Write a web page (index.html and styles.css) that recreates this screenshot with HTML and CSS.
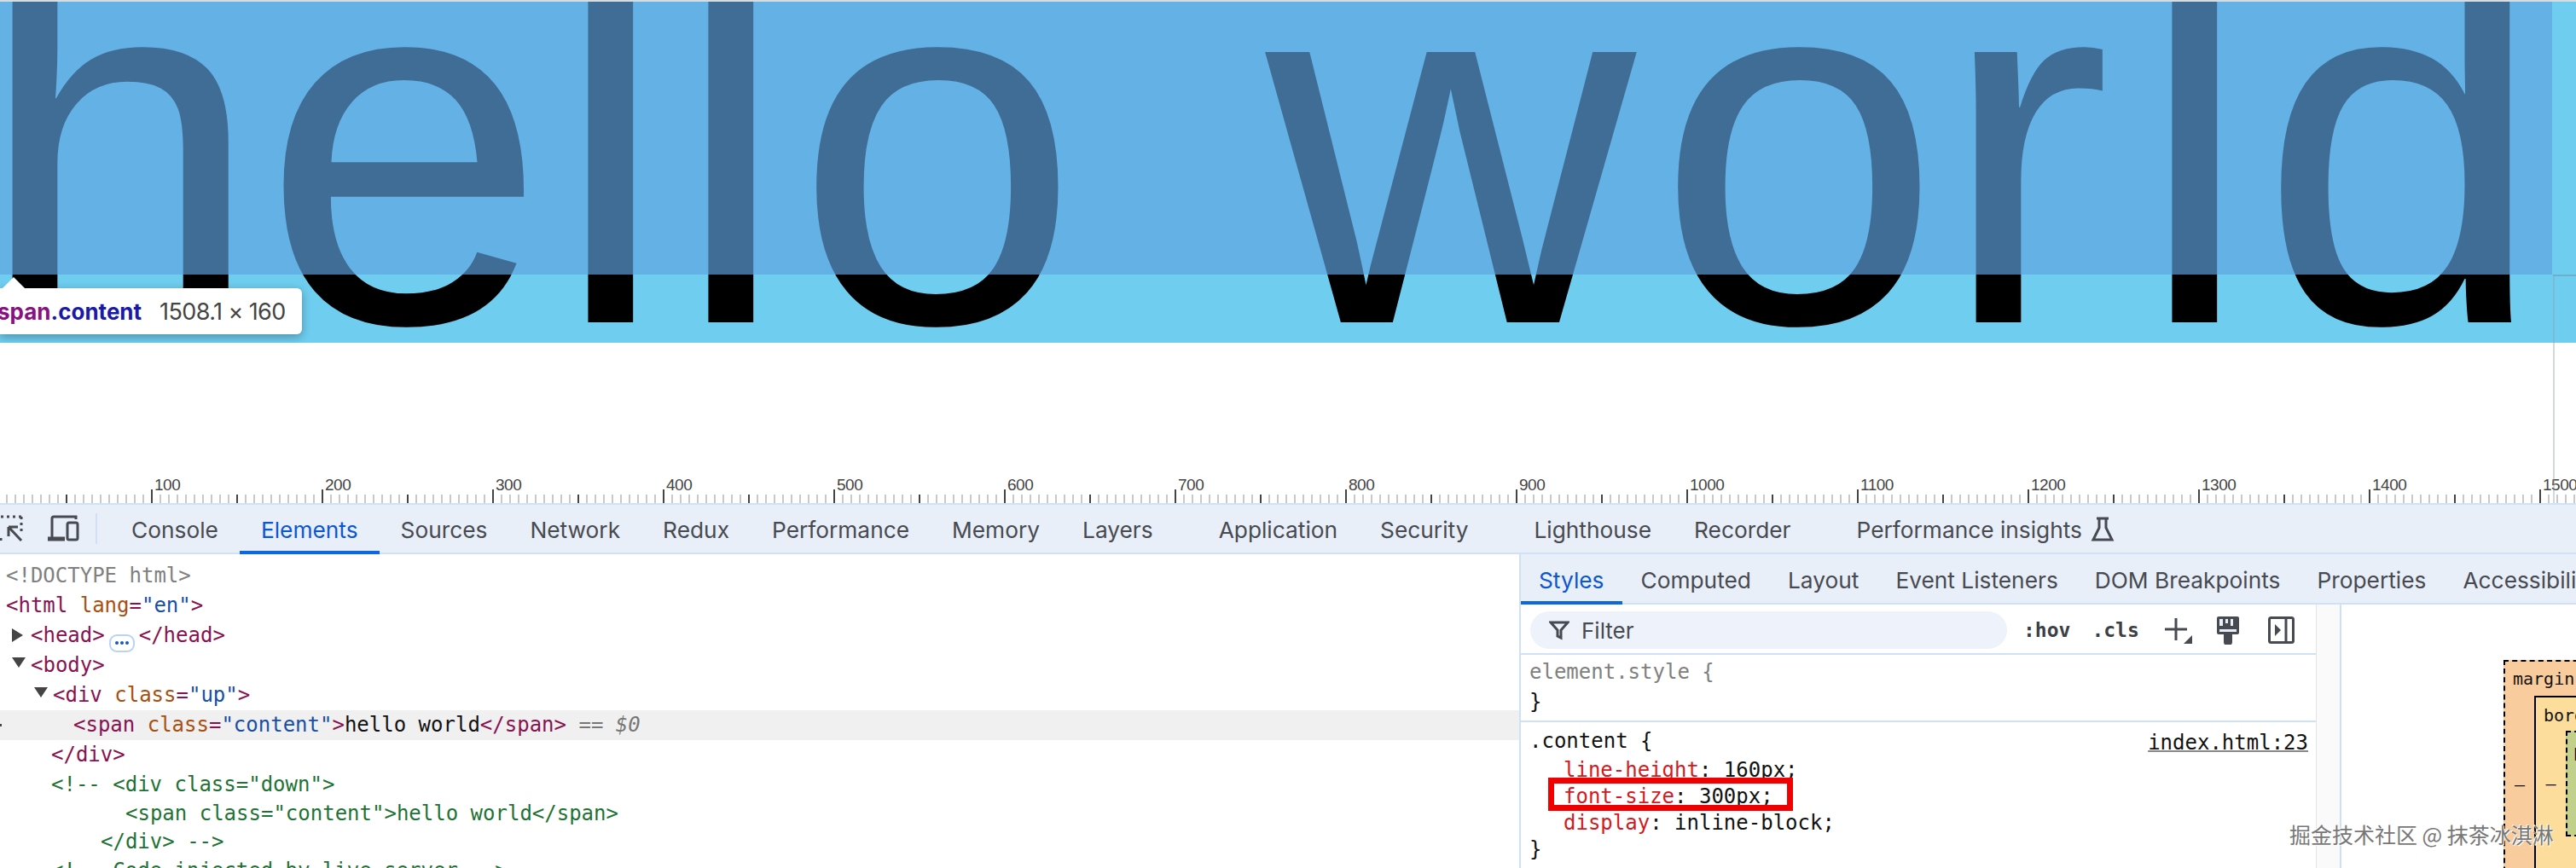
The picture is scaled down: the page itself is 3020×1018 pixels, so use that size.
FILE: index.html
```html
<!DOCTYPE html>
<html lang="en">
<head>
<meta charset="utf-8">
<title>DevTools</title>
<link rel="stylesheet" href="styles.css">
</head>
<body>
<div class="viewport">
  <div class="up">
    <svg class="big" width="3020" height="400" viewBox="0 0 3020 400"><text x="-27 307 649 790 932 1400 1484 1942 2275 2506 2649" y="376">hello world</text></svg>
    <div class="overlay"></div>
  </div>
  <div class="guide-h"></div>
  <div class="guide-v"></div>
  <div class="tip">
    <div class="tip-arrow"></div>
    <span class="tip-tag">span</span><span class="tip-cls">.content</span><span class="tip-size">1508.1 × 160</span>
  </div>
  <div class="ruler">
    <span>100</span><span>200</span><span>300</span><span>400</span><span>500</span><span>600</span><span>700</span><span>800</span><span>900</span><span>1000</span><span>1100</span><span>1200</span><span>1300</span><span>1400</span><span>1500</span>
  </div>
</div>
<div class="toolbar">
  <svg class="ic-inspect" width="30" height="34" viewBox="0 0 30 34"><path d="M1 3h3M8 3h3M15 3h3M22 3h3M25 3v3M25 10v3M25 17v3M1 28v3" class="ic-dots"/><path d="M10 15h11M10 15v11M10 15l15 16" class="ic-line"/></svg>
  <svg class="ic-device" width="38" height="32" viewBox="0 0 38 32"><path d="M6 26V4a2 2 0 0 1 2-2h26v3" class="ic-line"/><path d="M1 28h20" class="ic-thick"/><rect x="24" y="9" width="12" height="20" rx="2" class="ic-line"/></svg>
  <div class="divider"></div>
  <div class="tab">Console</div>
  <div class="tab on">Elements</div>
  <div class="tab">Sources</div>
  <div class="tab">Network</div>
  <div class="tab">Redux</div>
  <div class="tab">Performance</div>
  <div class="tab">Memory</div>
  <div class="tab wide">Layers</div>
  <div class="tab">Application</div>
  <div class="tab wide">Security</div>
  <div class="tab">Lighthouse</div>
  <div class="tab wide">Recorder</div>
  <div class="tab">Performance insights<svg class="ic-flask" width="28" height="30" viewBox="0 0 28 30"><path d="M7 2h14M10 2v11L3 27h22L18 13V2" class="ic-line"/></svg></div>
</div>
<div class="panels">
  <div class="dom">
    <div class="row i7 gray">&lt;!DOCTYPE html&gt;</div>
    <div class="row i7"><b class="t">&lt;html</b> <b class="a">lang</b><b class="t">=</b><b class="v">"en"</b><b class="t">&gt;</b></div>
    <div class="row i13"><i class="tw right"></i><b class="t">&lt;head&gt;</b><span class="pill"><i></i><i></i><i></i></span><b class="t">&lt;/head&gt;</b></div>
    <div class="row i13"><i class="tw down"></i><b class="t">&lt;body&gt;</b></div>
    <div class="row i39"><i class="tw down"></i><b class="t">&lt;div</b> <b class="a">class</b><b class="t">=</b><b class="v">"up"</b><b class="t">&gt;</b></div>
    <div class="row i86 sel"><b class="t">&lt;span</b> <b class="a">class</b><b class="t">=</b><b class="v">"content"</b><b class="t">&gt;</b>hello world<b class="t">&lt;/span&gt;</b> <b class="eq">== <em>$0</em></b></div>
    <div class="row i60"><b class="t">&lt;/div&gt;</b></div>
    <div class="row i60 c">&lt;!-- &lt;div class="down"&gt;</div>
    <div class="row tight i147 c">&lt;span class="content"&gt;hello world&lt;/span&gt;</div>
    <div class="row tight i118 c">&lt;/div&gt; --&gt;</div>
    <div class="row i60 c">&lt;!-- Code injected by live-server --&gt;</div>
  </div>
  <div class="side">
    <div class="subtabs">
      <div class="sub on">Styles</div>
      <div class="sub">Computed</div>
      <div class="sub">Layout</div>
      <div class="sub">Event Listeners</div>
      <div class="sub">DOM Breakpoints</div>
      <div class="sub">Properties</div>
      <div class="sub">Accessibility</div>
    </div>
    <div class="side-body">
      <div class="styles">
        <div class="filterbar">
          <div class="filter">
            <svg class="ic-filter" width="24" height="24" viewBox="0 0 24 24"><path d="M2 3h20l-8 9v9l-4-2v-7z" class="ic-line"/></svg>
            <span>Filter</span>
          </div>
          <span class="tool hov">:hov</span>
          <span class="tool cls">.cls</span>
          <svg class="ic-plus" width="34" height="32" viewBox="0 0 34 32"><path d="M14 2v26M1 15h26" class="ic-line"/><path d="M33 22v10H23z" class="ic-fill"/></svg>
          <svg class="ic-brush" width="28" height="34" viewBox="0 0 28 34"><path d="M1 3a2 2 0 0 1 2-2h22a2 2 0 0 1 2 2v17a2 2 0 0 1-2 2h-6v9a4 4 0 0 1-10 0v-9H3a2 2 0 0 1-2-2z" class="ic-fill"/><path d="M4 16h20v3H4zM11 4h3v5h-3zM17 4h3v8h-3zM4 4h4v8H4z" class="ic-cut"/></svg>
          <svg class="ic-toggle" width="31" height="32" viewBox="0 0 31 32"><rect x="1.5" y="1.5" width="28" height="29" rx="2" class="ic-line"/><path d="M21 2v28" class="ic-line"/><path d="M8 9l7 7-7 7z" class="ic-fill"/></svg>
        </div>
        <div class="rule first">
          <div class="line gray">element.style {</div>
          <div class="line">}</div>
        </div>
        <div class="rule">
          <div class="line head"><span>.content {</span><span class="src">index.html:23</span></div>
          <div class="prop"><b class="p">line-height</b>: 160px;</div>
          <div class="prop marked"><b class="p">font-size</b>: 300px;<div class="redbox"></div></div>
          <div class="prop"><b class="p">display</b>: inline-block;</div>
          <div class="prop end">}</div>
        </div>
      </div>
      <div class="gutter"></div>
      <div class="metrics">
        <div class="mbox">
          <div class="mlabel m-margin">margin</div>
          <div class="dash">–</div>
          <div class="bbox">
            <div class="mlabel m-border">border</div>
            <div class="dash">–</div>
            <div class="pbox"><div class="mlabel m-pad">padding</div></div>
          </div>
        </div>
      </div>
    </div>
  </div>
</div>
<div class="mark">掘金技术社区 @ 抹茶冰淇淋</div>
</body>
</html>
```
FILE: styles.css
```css
* { box-sizing: border-box; }
html, body { margin: 0; padding: 0; }
body { width: 3020px; height: 1018px; overflow: hidden; background: #fff; position: relative; font-family: Inter, "Liberation Sans", sans-serif; }

.viewport { position: relative; height: 590px; display: flex; flex-direction: column; overflow: hidden; border-top: 2px solid #d3dde2; }
.up { position: relative; height: 400px; background: #6fcef0; flex: none; }
.big { display: block; }
.big text { font-family: "Liberation Sans", sans-serif; font-size: 600px; fill: #000; }
.overlay { position: absolute; left: 0; top: 0; width: 2992px; height: 320px; background: rgba(94, 163, 224, .67); }
.guide-h { position: absolute; left: 2993px; top: 320px; width: 27px; height: 2px; background: rgba(110, 150, 175, .55); }
.guide-v { position: absolute; left: 2993px; top: 320px; width: 1.5px; height: 270px; background: rgba(140, 160, 175, .4); }

.tip { position: absolute; left: 0; top: 336px; width: 354px; height: 54px; background: #fff; border-radius: 0 6px 6px 0; box-shadow: 0 3px 12px rgba(0, 0, 0, .32); display: flex; align-items: center; font-size: 26px; white-space: nowrap; }
.tip-arrow { position: absolute; left: 3px; top: -13px; border-left: 13px solid transparent; border-right: 13px solid transparent; border-bottom: 13px solid #fff; }
.tip-tag { color: #881280; font-weight: 700; margin-left: -3px; }
.tip-cls { color: #1a1aa6; font-weight: 700; }
.tip-size { color: #444; margin-left: 21px; font-size: 27px; letter-spacing: -.6px; }

.ruler { margin-top: auto; height: 30px; flex: none; display: flex; padding-left: 177px; overflow: hidden; font-family: "Liberation Sans", sans-serif; font-size: 19px; line-height: 18px; letter-spacing: -.5px; color: #444;
  background-image: linear-gradient(90deg, #444 2px, transparent 2px), linear-gradient(90deg, #444 2px, transparent 2px), linear-gradient(90deg, #c9c9c9 2px, transparent 2px);
  background-size: 200px 16px, 100px 10px, 10px 10px;
  background-position: 177px 100%, 77px 100%, 7px 100%;
  background-repeat: repeat-x; }
.ruler span { flex: none; width: 200px; padding-left: 4px; }

.toolbar { height: 60px; display: flex; align-items: center; background: #e9eff9; border-top: 2px solid #cfe1f6; border-bottom: 2px solid #cfe1f6; font-size: 26.3px; color: #474a50; white-space: nowrap; }
.ic-line { fill: none; stroke: #474a50; stroke-width: 3; }
.ic-thick { fill: none; stroke: #474a50; stroke-width: 5; }
.ic-dots { fill: none; stroke: #474a50; stroke-width: 3; }
.ic-fill { fill: #474a50; }
.ic-cut { fill: #e9eff9; }
.ic-inspect { flex: none; margin-left: 0; }
.ic-device { flex: none; margin-left: 25px; }
.divider { flex: none; width: 2px; height: 36px; background: #d2e0f3; margin: 0 15px 0 19px; }
.tab { flex: none; height: 56px; padding: 2px 25px 0; display: flex; align-items: center; position: relative; }
.tab.wide { margin-right: 27px; }
.tab.on { color: #0b57d0; }
.tab.on::after { content: ""; position: absolute; left: 0; right: 0; bottom: -2px; height: 4px; background: #0b68e0; }
.ic-flask { margin-left: 10px; }

.panels { height: 368px; display: flex; overflow: hidden; }
.dom { width: 1781px; flex: none; padding-top: 8px; font-family: "DejaVu Sans Mono", monospace; font-size: 24px; color: #111; overflow: hidden; }
.row { height: 35px; line-height: 35px; position: relative; white-space: pre; }
.row.tight { height: 33px; line-height: 33px; }
.i7 { padding-left: 7px; }
.i13 { padding-left: 13px; }
.i39 { padding-left: 39px; }
.i60 { padding-left: 60px; }
.i86 { padding-left: 86px; }
.i118 { padding-left: 118px; }
.i147 { padding-left: 147px; }
.row b { font-weight: 400; }
.gray { color: #808080; }
.t { color: #881250; }
.a { color: #a84f10; }
.v { color: #174ea6; }
.c { color: #1e7234; }
.sel { background: #f0f0f0; }
.sel::before { content: ""; position: absolute; left: 0; top: 16px; width: 2px; height: 3px; background: #444; }
.eq { color: #777; }
.eq em { font-style: italic; }
.tw { display: inline-block; width: 23px; height: 14px; position: relative; vertical-align: baseline; }
.tw::before { content: ""; position: absolute; left: 1px; }
.tw.right::before { top: -2px; border-left: 13px solid #444; border-top: 8px solid transparent; border-bottom: 8px solid transparent; }
.tw.down::before { top: -3px; border-top: 12px solid #444; border-left: 8px solid transparent; border-right: 8px solid transparent; }
.pill { display: inline-flex; align-items: center; justify-content: center; gap: 2px; width: 30px; height: 21px; margin: 0 5px 0 5px; border: 2px solid #b9d2f5; border-radius: 9px; vertical-align: -3px; }
.pill i { width: 4px; height: 4px; border-radius: 50%; background: #1558c0; }

.side { width: 1239px; flex: none; border-left: 2px solid #cfe1f6; display: flex; flex-direction: column; overflow: hidden; }
.subtabs { height: 59px; flex: none; display: flex; background: #e9eff9; border-bottom: 2px solid #cfe1f6; font-size: 26.3px; color: #474a50; white-space: nowrap; }
.sub { flex: none; padding: 2px 22px 0 21px; line-height: 57px; position: relative; }
.sub.on { color: #0b57d0; }
.sub.on::after { content: ""; position: absolute; left: 0; right: 0; bottom: -2px; height: 4px; background: #0b68e0; }
.side-body { flex: 1; display: flex; min-height: 0; }
.styles { width: 932px; flex: none; font-family: "DejaVu Sans Mono", monospace; font-size: 24px; color: #111; }
.filterbar { height: 59px; padding-top: 3px; display: flex; align-items: center; border-bottom: 2px solid #cfe1f6; }
.filter { width: 559px; height: 44px; flex: none; margin: 0 19px 0 11px; border-radius: 22px; background: #edf2fb; display: flex; align-items: center; padding-left: 22px; font-family: Inter, sans-serif; font-size: 26px; color: #474a50; gap: 14px; }
.ic-filter { flex: none; }
.tool { font-weight: 700; font-size: 23px; color: #3c3f44; white-space: pre; }
.hov { margin-right: 25px; }
.cls { margin-right: 29px; }
.ic-plus { flex: none; margin-right: 27px; }
.ic-brush { flex: none; margin-right: 33px; }
.ic-toggle { flex: none; }
.rule.first { height: 79px; padding: 3px 0 0 10px; border-bottom: 2px solid #cfe1f6; }
.line { height: 35px; line-height: 35px; white-space: pre; }
.line.head { height: 41px; padding: 5px 9px 0 10px; display: flex; justify-content: space-between; }
.src { line-height: 38px; height: 36px; text-decoration: underline; text-decoration-color: #888; text-decoration-thickness: 2px; }
.prop { height: 31px; line-height: 31px; padding-left: 50px; position: relative; white-space: pre; }
.prop.end { padding-left: 10px; }
.p { font-weight: 400; color: #d11a22; }
.redbox { position: absolute; left: 32px; top: -7px; width: 287px; height: 39px; border: 7px solid #f00000; }
.gutter { width: 30px; flex: none; background: #fafafa; border-left: 1px solid #e4e4e4; border-right: 2px solid #cfe1f6; }
.metrics { flex: 1; min-width: 0; padding: 65px 0 0 190px; overflow: hidden; }
.mbox { width: 200px; height: 400px; background: #f9cc9d; border: 2px dashed #000; display: grid; grid-template-columns: 34px 200px; grid-template-rows: 40px 208px; }
.mlabel { font-family: "DejaVu Sans Mono", monospace; font-size: 20px; color: #111; white-space: nowrap; }
.m-margin { grid-column: 1 / 3; padding-left: 9px; line-height: 40px; }
.dash { align-self: center; text-align: center; font-family: "DejaVu Sans Mono", monospace; font-size: 20px; color: #111; }
.bbox { width: 200px; background: #fddd9b; border: 2px solid #000; display: grid; grid-template-columns: 35px 200px; grid-template-rows: 39px 124px; }
.m-border { grid-column: 1 / 3; padding-left: 9px; line-height: 42px; }
.pbox { width: 200px; background: #c3d08b; border: 2px dashed #000; }
.m-pad { padding: 10px 0 0 7px; }

.mark { position: absolute; left: 2684px; top: 962px; font-family: "Noto Sans CJK SC", sans-serif; font-size: 25px; line-height: 32px; color: #777; white-space: nowrap; text-shadow: 1px 1px 0 #fff, -1px -1px 0 #fff; }
```
